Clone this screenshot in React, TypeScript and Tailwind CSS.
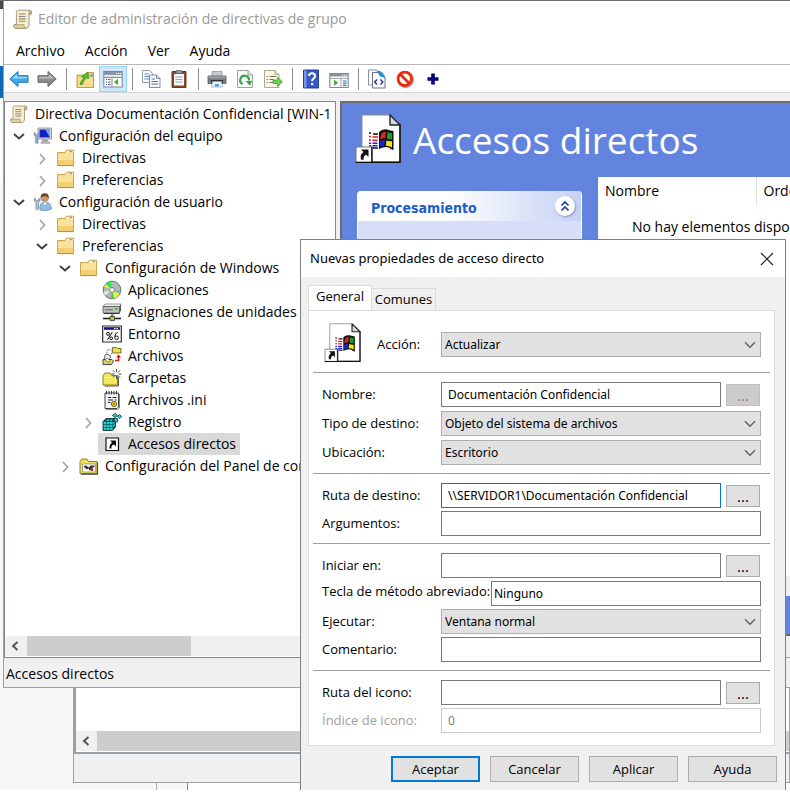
import React, { useId, useState } from "react";

type IconProps = { className?: string };

const UI = "font-['Open_Sans','Noto_Sans',sans-serif]";
const CAPTION = "font-['Noto_Sans','Open_Sans',sans-serif]";

/* ---------- icons ---------- */

function ScrollIcon({ className = "size-5" }: IconProps) {
  return (
    <svg viewBox="0 0 20 20" className={className} aria-hidden="true">
      <path d="M5 2 H16.5 Q18.5 2.5 17.5 5.5 H15.5 V16 Q15 18.5 12.5 18.5 H3 Q1 17.5 2 15 H4 V4 Q4 2.5 5 2Z" fill="#f7eecb" stroke="#a39a7c" strokeWidth="0.9" />
      <path d="M15.5 5.5 Q14.5 3 16.5 2.2 Q18.6 2.6 17.6 5.5Z" fill="#d6c890" stroke="#8f8768" strokeWidth="0.7" />
      <path d="M2 15.2 H11 Q10.6 18 12.5 18.5 H3 Q1 17.5 2 15.2Z" fill="#e2d39a" stroke="#9a9070" strokeWidth="0.7" />
      <path d="M6.3 5.5h6M6.3 7.7h6M6.3 9.9h6M6.3 12.1h6" stroke="#8d8a80" strokeWidth="1" />
    </svg>
  );
}

function FolderIcon({ className = "size-5" }: IconProps) {
  return (
    <svg viewBox="0 0 20 20" className={className} aria-hidden="true">
      <path d="M1.5 17.5 V4.5 H9 L10.5 2.2 H17.5 V17.5Z" fill="#f6d98a" stroke="#c79f45" strokeWidth="0.9" />
      <path d="M11 3h6v1.6h-7z" fill="#fff6d8" />
      <path d="M13.5 2.8h2.5v1.4h-2.5z" fill="#6fa6cf" />
      <path d="M2 6.3 H9.5 L11 5 H17 V17 H2Z" fill="#fbe29c" />
      <path d="M2 12h15v5H2z" fill="#f3cf74" />
      <path d="M1.5 17.6h16" stroke="#b98f36" />
    </svg>
  );
}

function ComputerIcon() {
  return (
    <svg viewBox="0 0 20 20" className="size-5" aria-hidden="true">
      <path d="M5 2h13.5v11H5z" fill="#d9dbe2" stroke="#85888f" strokeWidth="0.8" />
      <path d="M6.5 3.5h10.5v8H6.5z" fill="#0e22c8" />
      <path d="M12 3.5h5v8z" fill="#7ba2f5" />
      <path d="M9.5 13h5l1 3h-7z" fill="#a8abb2" />
      <path d="M8 16h9v1.5H8z" fill="#c9ccd2" stroke="#8c8f96" strokeWidth="0.5" />
      <path d="M1 6v3.200l1.600 1.400V17q1.200 1.500 2.400 0v-6.400L6.600 9.200V6L5 7.500v1.200H2.600V7.500z" fill="#8fb3d4" stroke="#5f7e9a" strokeWidth="0.600" />
    </svg>
  );
}

function UserIcon() {
  return (
    <svg viewBox="0 0 20 20" className="size-5" aria-hidden="true">
      <path d="M7 18 Q6 11.500 10 10.500 H14 Q18.500 11.500 18.500 17 Q14 19.500 7 18Z" fill="#8fbde6" stroke="#5688b5" strokeWidth="0.7" />
      <path d="M10.500 10.500 12 13.500l1.800-3z" fill="#fff" />
      <circle cx="11.800" cy="6" r="4" fill="#c9976c" />
      <path d="M7.500 6 Q7.300 1.300 11.500 1.300 Q16.200 1.400 15.800 6.500 Q14.500 3.800 11 4.300 Q9 4.500 7.500 6Z" fill="#6b4526" />
      <path d="M1.500 6v3l1.500 1.400V17q1.200 1.500 2.400 0v-6.600L7 9V6L5.400 7.400v1.300H3V7.400z" fill="#c3cfd9" stroke="#5c6f80" strokeWidth="0.7" />
    </svg>
  );
}

function DiscIcon() {
  return (
    <svg viewBox="0 0 20 20" className="size-5" aria-hidden="true">
      <circle cx="10" cy="10" r="8.800" fill="#b4b8b9" stroke="#5e6264" strokeWidth="0.9" />
      <path d="M10 10 3.500 4 Q6 1.500 9 1.300Z" fill="#35e05c" />
      <path d="M10 10 2 6.500 3.500 4Z" fill="#f4ef3c" />
      <path d="M10 10 17.800 13.500 Q16 17 12 18.500Z" fill="#f4ef3c" />
      <path d="M10 10 18.600 11 17.800 13.500Z" fill="#38c9e8" />
      <path d="M10 10 12 18.500 9 18.700Z" fill="#2ed653" />
      <path d="M10 10 1.300 12 3 15.500Z" fill="#e9ecec" />
      <circle cx="10" cy="10" r="2.600" fill="#e8e8e8" stroke="#777" strokeWidth="0.8" />
      <circle cx="10" cy="10" r="0.900" fill="#fff" />
    </svg>
  );
}

function DriveIcon() {
  return (
    <svg viewBox="0 0 20 20" className="size-5" aria-hidden="true">
      <path d="M1 4.500 3 2h16l-1 2.500z" fill="#efefef" stroke="#777" strokeWidth="0.7" />
      <path d="M1 4.500h16.500V11H1z" fill="#bdbdbd" stroke="#555" strokeWidth="0.8" />
      <path d="M17.500 4.500 19 2v6.500L17.500 11z" fill="#555" />
      <path d="M3 7.800h8" stroke="#666" strokeWidth="1" />
      <path d="M13 6h2.500v1.500H13z" fill="#18c22e" />
      <path d="M2 11.500h15.500" stroke="#333" strokeWidth="1" />
      <path d="M9 12h2.500v3H9z" fill="#888" />
      <path d="M1 16.500h18" stroke="#222" strokeWidth="1.600" />
      <path d="M8 14.500h4.500v4H8z" fill="#c8c02a" stroke="#333" strokeWidth="0.800" />
    </svg>
  );
}

function EnvIcon() {
  return (
    <svg viewBox="0 0 20 20" className="size-5" aria-hidden="true">
      <path d="M0.700 2h18.600v16H0.700z" fill="#fff" stroke="#333" strokeWidth="1.200" />
      <path d="M2 3.200h16v2.600H2z" fill="#12128c" />
      <path d="M12 4h1.500v1.200H12zM14.500 4H16v1.200h-1.500z" fill="#fff" />
      <g fill="none" stroke="#111" strokeWidth="1">
        <circle cx="6" cy="9.800" r="1.500" />
        <path d="M10.300 8 5.500 15.800" />
        <circle cx="9.200" cy="14.300" r="1.400" />
        <path d="M15.800 8.500q-3 .5-3 4.500" />
        <circle cx="14.600" cy="13.800" r="1.800" />
      </g>
    </svg>
  );
}

function FilesIcon() {
  return (
    <svg viewBox="0 0 20 20" className="size-5" aria-hidden="true">
      <path d="M10.500 1.500h4l1 1H19V7h-8.500z" fill="#e8e04a" stroke="#555513" strokeWidth="0.800" />
      <path d="M5.500 4 8.500 3l2 3-3.500 6-3-1.500z" fill="#fff" stroke="#555" strokeWidth="0.800" strokeDasharray="1.500 1" />
      <path d="M3 9 6 8l2.500 3L6 16l-4-1z" fill="#f4f4f4" stroke="#444" strokeWidth="0.800" />
      <path d="M1 13.500h9l1.500 1.500-2 3.500H1z" fill="#e5dc44" stroke="#333" strokeWidth="0.900" />
      <path d="M3 14l2-2 3 2.500-1 2z" fill="#fff" stroke="#333" strokeWidth="0.600" />
      <path d="M16.500 9.500V14.500H13" stroke="#e01a1a" strokeWidth="1.600" fill="none" />
      <path d="M14 11.500 16.500 8.500 19 11.500z" fill="#e01a1a" />
    </svg>
  );
}

function NewFolderIcon() {
  return (
    <svg viewBox="0 0 20 20" className="size-5" aria-hidden="true">
      <path d="M1 17V7.500L3 5h5l1.500 2.500H15.500V17z" fill="#f0e85c" stroke="#8a8320" strokeWidth="1" />
      <path d="M2 9.500h13" stroke="#fbf7a5" />
      <path d="M2.500 18h14V9" stroke="#333" fill="none" strokeWidth="0.800" />
      <path d="M14.500 1v3M14.500 8v3M9.500 6h3M16.500 6h3M11 2.500l2 2M18 2.500l-2 2M18 9.500l-2-2M11 9.500l2-2" stroke="#333" strokeWidth="0.900" />
      <circle cx="14.500" cy="6" r="1.300" fill="#fff" />
    </svg>
  );
}

function IniIcon() {
  return (
    <svg viewBox="0 0 20 20" className="size-5" aria-hidden="true">
      <path d="M3 3h13.500v14L15 18.500H3z" fill="#f6f6f6" stroke="#444" strokeWidth="1" />
      <path d="M17.500 4v14l-2 1.500H4" stroke="#888" fill="none" />
      <path d="M4.500 1v3.500M7 1v3.500M9.500 1v3.500M12 1v3.500M14.500 1v3.500" stroke="#444" strokeWidth="1" />
      <path d="M6 7.500h3M10.500 7.500h4M6 10h5M12.500 10h2M6 12.500h2.500" stroke="#222" strokeWidth="1.100" />
      <circle cx="12" cy="14" r="2.600" fill="#e6d92c" stroke="#4a4505" strokeWidth="0.800" />
      <circle cx="12" cy="14" r="0.800" fill="#4a4505" />
    </svg>
  );
}

function RegistryIcon() {
  return (
    <svg viewBox="0 0 20 20" className="size-5" aria-hidden="true">
      <path d="M1 9.500 4 6.500h9.500V15l-3 3.500H1z" fill="#0d4f55" stroke="#082a2e" strokeWidth="0.800" />
      <g fill="#22d3d6">
        <path d="M1.600 9.900h2.600v2.400H1.600zM4.800 9.900h2.600v2.400H4.800zM8 9.900h2.600v2.400H8zM1.600 12.900h2.600v2.400H1.600zM4.800 12.900h2.600v2.400H4.800zM8 12.900h2.600v2.400H8zM1.600 15.900h2.600v2.200H1.600zM4.800 15.900h2.600v2.200H4.800zM8 15.900h2.600v2.200H8z" />
        <path d="M11.200 10.500 13 8.500v2l-1.800 2zM11.200 13.500 13 11.500v2l-1.800 2z" />
        <path d="M4 9 5.500 7.300h2L6 9zM7.500 9 9 7.300h2L9.500 9z" />
        <path d="M10.500 3.500 13 1.500l2.500 2L13 5.500zM15.500 4.500l2-2 2 2-2 2z" stroke="#082a2e" strokeWidth="0.800" />
        <path d="M12 6.500h3.500V10h-3z" stroke="#082a2e" strokeWidth="0.800" />
      </g>
    </svg>
  );
}

function ShortcutIcon() {
  return (
    <svg viewBox="0 0 20 20" className="size-5" aria-hidden="true">
      <path d="M4 4h12.500v12.500H4z" fill="#fff" stroke="#111" strokeWidth="1.200" />
      <path d="M8 6.500h6v6l-2-2q-3 .5-2.500 4H7.500q-.5-4 2.500-6z" fill="#111" />
    </svg>
  );
}

function ControlPanelIcon() {
  return (
    <svg viewBox="0 0 20 20" className="size-5" aria-hidden="true">
      <path d="M1 17.500V5.500L3 3h5l1.500 2.500H18v12z" fill="#eee05a" stroke="#8b8020" strokeWidth="1" />
      <path d="M2 18.300h16.600V6.500" stroke="#333" fill="none" strokeWidth="0.900" />
      <path d="M3.500 8h13v8h-13z" fill="#fffef0" stroke="#777" strokeWidth="0.600" />
      <path d="M4.500 11q2-2.500 4-.5l1.500 1 1.500-2h4V11l-2 .5-1 3h-1.500l-1.500-2-2 1-1-1.500z" fill="#333" />
      <path d="M12 12h2v3h-2z" fill="#d5242a" />
    </svg>
  );
}

function ShortcutPage({ className }: IconProps) {
  return (
    <svg viewBox="0 0 46 49" className={className} aria-hidden="true">
      <path d="M7 1h28l10 10v37H7z" fill="#fff" stroke="#8a8a8a" strokeWidth="1" />
      <path d="M45 10.500V48.300H6" fill="none" stroke="#111" strokeWidth="1.600" />
      <path d="M35 1v10h10z" fill="#d9d9d9" stroke="#222" strokeWidth="1.400" strokeLinejoin="round" />
      <path d="M24 18q3.500-3.500 8-2.500 3.500 1 6.500 1.500V36q-2.500-.5-4.500-2.500-3.500-1.500-10 1.500z" fill="#111" />
      <path d="M26.500 19.500q2-2 4.500-1.800l-.8 6.500q-2.500-.2-5.200 1.300z" fill="#e32020" />
      <path d="M32.500 18q2 1 4.500 1v6.500q-3 0-5.200-1z" fill="#1d9a32" />
      <path d="M25 27.500q2.500-1.500 5-1.200l-.8 5.700q-2.200-.2-4.700 1z" fill="#1824d8" />
      <path d="M31.500 26.500q2.500 1 5.500.8V33.500q-3-2-6.300-1.800z" fill="#f5e51b" />
      <path d="M14 19h2M18 20h5M14 34h2M18 34h5" stroke="#111" strokeWidth="1.700" />
      <path d="M14 22.500h2M17.500 23h5.500M14 26h2M17.500 26.300h5" stroke="#e32020" strokeWidth="1.700" />
      <path d="M14 29.300h2M17.500 29.300h5M14 31.800h2M17.500 31.800h5" stroke="#1824d8" strokeWidth="1.500" />
      <path d="M1 33h15.500v15.300H1z" fill="#fff" stroke="#777" strokeWidth="1" />
      <path d="M17 32.500v16H.5" fill="none" stroke="#111" strokeWidth="1.400" />
      <path d="M6 35.500h7.500v7.500l-2.300-2.300q-3 1-2.700 5H6q-1.500-5 2.500-7.700z" fill="#111" />
    </svg>
  );
}

const toolIcons: Record<string, React.ReactNode> = {
  back: (
    <>
      <path d="M0.800 10 9 2.500v4.200h10v6.600H9v4.200z" fill="#3fa9ea" stroke="#1b73b8" strokeWidth="1" strokeLinejoin="round" />
      <path d="M3 9.500 8.200 5v2.700H18v1.800z" fill="#9bd8fb" />
    </>
  ),
  forward: (
    <>
      <path d="M19.200 10 11 2.500v4.200H1v6.600h10v4.200z" fill="#8c8c8c" stroke="#666" strokeWidth="1" strokeLinejoin="round" />
      <path d="M17 9.500 11.800 5v2.700H2v1.800z" fill="#b9b9b9" />
    </>
  ),
  up: (
    <>
      <path d="M2 18.500V6h8l2-2.500h6.500v15z" fill="#f5cf68" stroke="#c0943a" strokeWidth="0.900" />
      <path d="M3 9h15v9H3z" fill="#f9dd8a" />
      <path d="M15 5.500h3v2h-3z" fill="#6f9fc7" />
      <path d="M5 15.500q1-4.500 4-6.500L6.500 7.500 13 3l.5 6.500L11.500 9Q8 11.500 7.500 15.500z" fill="#53bf35" stroke="#2f8a1c" strokeWidth="0.700" />
    </>
  ),
  tree: (
    <>
      <path d="M0.800 2.500h18.400v15.500H0.800z" fill="#fff" stroke="#7d8794" strokeWidth="1.100" />
      <path d="M1 3h18v3H1z" fill="#8b96a5" />
      <path d="M13 4.500h1.200M15 4.500h1.200M17 4.500h1.200" stroke="#fff" strokeWidth="1.200" />
      <path d="M1.300 7.200h17.400" stroke="#c6ccd4" />
      <path d="M9 8v10M1 8.500h18" stroke="#7d8794" strokeWidth="0.900" />
      <path d="M3 10.500h1M3 13h1M3 15.500h1M5 10.500h2.500M5 13h2.500M5 15.500h2.500" stroke="#47688e" strokeWidth="1.200" />
      <path d="M15 9.800v6.400L11 13z" fill="#48ad35" />
    </>
  ),
  copy: (
    <>
      <path d="M1.500 1.500h7l3 3v9h-10z" fill="#fbfcfe" stroke="#8593a6" strokeWidth="0.900" />
      <path d="M3.500 5h4M3.500 7.500h5M3.500 10h5" stroke="#6288b8" />
      <path d="M8.500 6h7l3.500 3.500v9H8.500z" fill="#fbfcfe" stroke="#6f7f95" strokeWidth="0.900" />
      <path d="M15.500 6v3.500H19" fill="none" stroke="#6f7f95" strokeWidth="0.900" />
      <path d="M10.500 10h3.500M10.500 12.500h6.500M10.500 15h6.500" stroke="#3f73b8" strokeWidth="1.100" />
    </>
  ),
  paste: (
    <>
      <path d="M3 2.500h14v16H3z" fill="#8a4b26" stroke="#5c2e12" strokeWidth="0.900" />
      <path d="M5 5h10v11.500H5z" fill="#f7f8fa" />
      <path d="M7 1.500h6v3H7z" fill="#8b98a5" stroke="#55606b" strokeWidth="0.700" />
      <path d="M6.500 8h7M6.500 10.500h7M6.500 13h7" stroke="#9aa4b4" />
    </>
  ),
  print: (
    <>
      <path d="M5 2.500h10v5H5z" fill="#c6cacf" stroke="#8a8f96" strokeWidth="0.700" />
      <path d="M1 7h18v7.500H1z" fill="#7b8087" stroke="#54585e" strokeWidth="0.800" />
      <path d="M1.500 7.300h17v2h-17z" fill="#9ba1a8" />
      <path d="M4 11h12v3.500H4z" fill="#2f3338" />
      <path d="M5.500 12.500h9l1 5.500h-11z" fill="#e9f3fb" stroke="#94a8ba" strokeWidth="0.700" />
      <path d="M8 15h4v2.500H8z" fill="#4aa3dd" />
    </>
  ),
  refresh: (
    <>
      <path d="M2.500 1.500H13l4.500 4.500v12.500h-15z" fill="#f8faf8" stroke="#8f9a92" strokeWidth="0.900" />
      <path d="M13 1.500V6h4.500" fill="#dfe5e0" stroke="#8f9a92" strokeWidth="0.900" />
      <path d="M7.500 15A4.400 4.400 0 1 1 14 11.500" fill="none" stroke="#35a343" strokeWidth="2.200" />
      <path d="M10.500 12h6.500l-2 4.800z" fill="#35a343" />
    </>
  ),
  exportList: (
    <>
      <path d="M1.500 1.500H12l4 4v13H1.500z" fill="#fbf8e6" stroke="#a39f85" strokeWidth="0.900" />
      <path d="M12 1.500v4h4" fill="#e5e0c4" stroke="#a39f85" strokeWidth="0.900" />
      <path d="M3.500 7.500h1.300M3.500 10.500h1.300M3.500 13.500h1.300M6.500 7.500h7M6.500 10.500h4M6.500 13.500h4" stroke="#777464" strokeWidth="1.100" />
      <path d="M10 11h4.500V8l5 4.800-5 4.700v-3H10z" fill="#6cd04f" stroke="#3d9a27" strokeWidth="0.700" />
    </>
  ),
  help: (
    <>
      <path d="M2.500 1h15v18h-15z" fill="#3558c4" stroke="#1d3488" strokeWidth="0.900" />
      <path d="M3 1.500h2.500v17H3z" fill="#7d97e4" />
      <path d="M8 7q0-2.700 3-2.700T14 7q0 1.600-1.500 2.600T11 12.300" fill="none" stroke="#fff" strokeWidth="2" />
      <path d="M10 14h2.200v2.200H10z" fill="#fff" />
    </>
  ),
  actions: (
    <>
      <path d="M0.800 4.500h18.400v14H0.800z" fill="#fbfbfb" stroke="#85898f" strokeWidth="1.100" />
      <path d="M1 5h18v2.500H1z" fill="#8b949e" />
      <path d="M13 6.300h1.200M15 6.300h1.200M17 6.300h1.200" stroke="#fff" />
      <path d="M1 9.500h18M12 9.500v9" stroke="#9aa0a7" strokeWidth="0.900" />
      <path d="M5 10.800v6l4.200-3z" fill="#48ad35" />
      <path d="M14 12h3.500M14 14.200h3.500M14 16.400h3.500" stroke="#3f73b8" strokeWidth="1.200" />
    </>
  ),
  xml: (
    <>
      <path d="M1.500 1h8l2 2v13h-10z" fill="#fbfcfe" stroke="#7b8694" strokeWidth="0.900" />
      <path d="M5.500 3.500H13l5 5v10.500H5.500z" fill="#fbfcfe" stroke="#5a6672" strokeWidth="0.900" />
      <path d="M9.500 1.500q7 0 8.800 7.500L13 7.500z" fill="#2f8fd0" />
      <path d="m10 10.500-2.300 2.500 2.300 2.500M13.500 10.500l2.300 2.500-2.300 2.500" fill="none" stroke="#3532a0" strokeWidth="1.500" />
    </>
  ),
  ban: (
    <>
      <circle cx="10.600" cy="10.700" r="7.500" fill="none" stroke="#55555588" strokeWidth="2" />
      <circle cx="9.800" cy="9.800" r="6.700" fill="#fff" stroke="#ee2b0c" strokeWidth="2.800" />
      <path d="m5.200 5.200 9.200 9.200" stroke="#ee2b0c" strokeWidth="2.800" />
    </>
  ),
  plus: <path d="M8.200 4.500h3.600v3.700h3.700v3.600h-3.700v3.700H8.200v-3.700H4.500V8.200h3.700z" fill="#00007c" />,
};

function Chevron({ open }: { open: boolean }) {
  return (
    <svg viewBox="0 0 20 20" className="size-5" aria-hidden="true">
      {open ? (
        <path d="m5 8 5 4.500L15 8" fill="none" stroke="#404040" strokeWidth="1.900" />
      ) : (
        <path d="m8 6 4.500 5L8 16" fill="none" stroke="#a3a3a3" strokeWidth="1.700" />
      )}
    </svg>
  );
}

function ScrollLeft() {
  return (
    <button type="button" aria-label="Desplazar a la izquierda" className="flex w-5 shrink-0 items-center justify-center">
      <svg viewBox="0 0 10 10" className="size-[10px]" aria-hidden="true">
        <path d="M7.500 1 3 5l4.500 4" fill="none" stroke="#555" strokeWidth="2" />
      </svg>
    </button>
  );
}

/* ---------- tool bar ---------- */

const toolGroups: [string, string][][] = [
  [["back", "Atrás"], ["forward", "Adelante"]],
  [["up", "Subir un nivel"], ["tree", "Mostrar árbol de consola"]],
  [["copy", "Copiar"], ["paste", "Pegar"]],
  [["print", "Imprimir"], ["refresh", "Actualizar"], ["exportList", "Exportar lista"]],
  [["help", "Ayuda"], ["actions", "Panel de acciones"]],
  [["xml", "Ver XML"], ["ban", "Detener"], ["plus", "Agregar"]],
];

function Toolbar() {
  return (
    <div className="flex h-7 items-center border-b border-[#d5d5d5] pt-px pl-px">
      {toolGroups.map((group, g) => (
        <React.Fragment key={g}>
          {g > 0 && (
            <span className="flex w-[10px] justify-center">
              <span className="h-[22px] w-px bg-[#8c8c8c]" />
            </span>
          )}
          {group.map(([id, label]) => (
            <button
              key={id}
              type="button"
              aria-label={label}
              className={
                id === "tree"
                  ? "flex h-[26px] w-7 items-center justify-center border border-[#99d1ff] bg-[#cce8ff]"
                  : "flex h-[26px] w-7 items-center justify-center"
              }
            >
              <svg viewBox="0 0 20 20" className="size-5" aria-hidden="true">{toolIcons[id]}</svg>
            </button>
          ))}
        </React.Fragment>
      ))}
    </div>
  );
}

/* ---------- tree ---------- */

const indents = ["pl-1", "pl-1", "pl-[27px]", "pl-[50px]", "pl-[73px]"];

type Node = { label: string; depth: number; icon: React.ReactNode; state?: "open" | "closed"; selected?: boolean };

const nodes: Node[] = [
  { label: "Directiva Documentación Confidencial [WIN-1", depth: 0, icon: <ScrollIcon /> },
  { label: "Configuración del equipo", depth: 1, icon: <ComputerIcon />, state: "open" },
  { label: "Directivas", depth: 2, icon: <FolderIcon />, state: "closed" },
  { label: "Preferencias", depth: 2, icon: <FolderIcon />, state: "closed" },
  { label: "Configuración de usuario", depth: 1, icon: <UserIcon />, state: "open" },
  { label: "Directivas", depth: 2, icon: <FolderIcon />, state: "closed" },
  { label: "Preferencias", depth: 2, icon: <FolderIcon />, state: "open" },
  { label: "Configuración de Windows", depth: 3, icon: <FolderIcon />, state: "open" },
  { label: "Aplicaciones", depth: 4, icon: <DiscIcon /> },
  { label: "Asignaciones de unidades", depth: 4, icon: <DriveIcon /> },
  { label: "Entorno", depth: 4, icon: <EnvIcon /> },
  { label: "Archivos", depth: 4, icon: <FilesIcon /> },
  { label: "Carpetas", depth: 4, icon: <NewFolderIcon /> },
  { label: "Archivos .ini", depth: 4, icon: <IniIcon /> },
  { label: "Registro", depth: 4, icon: <RegistryIcon />, state: "closed" },
  { label: "Accesos directos", depth: 4, icon: <ShortcutIcon />, selected: true },
  { label: "Configuración del Panel de control", depth: 3, icon: <ControlPanelIcon />, state: "closed" },
];

function Tree() {
  return (
    <ul className="flex-1 overflow-hidden pt-px">
      {nodes.map((n, i) => (
        <li key={i} className={`flex h-[22px] whitespace-nowrap ${indents[n.depth]}`}>
          {n.depth > 0 && <span className="flex w-5 shrink-0 items-center">{n.state && <Chevron open={n.state === "open"} />}</span>}
          <button
            type="button"
            className={`flex items-center gap-[6px] pr-1 ${n.depth > 0 ? "pl-1" : ""} ${n.selected ? "bg-[#d9d9d9]" : ""}`}
          >
            {n.icon}
            <span>{n.label}</span>
          </button>
        </li>
      ))}
    </ul>
  );
}

/* ---------- editor window ---------- */

function EditorWindow() {
  return (
    <section className={`absolute top-0 right-0 left-[3px] flex h-[687px] flex-col border-b border-l border-[#a0a0a0] bg-[#f0f0f0] text-[14px] leading-5 text-black ${UI}`}>
      <header className="flex h-9 items-center gap-1 bg-white pl-2 text-[#999]">
        <ScrollIcon className="size-[22px]" />
        <h1>Editor de administración de directivas de grupo</h1>
      </header>
      <nav className="flex h-7 items-center gap-5 border-b border-[#b8b8b8] bg-white px-3">
        {["Archivo", "Acción", "Ver", "Ayuda"].map((m) => (
          <button key={m} type="button">{m}</button>
        ))}
      </nav>
      <div className="bg-white">
        <Toolbar />
      </div>
      <div className="flex min-h-0 flex-1 gap-1 pt-2">
        <div className="flex w-[332px] shrink-0 flex-col border border-[#828790] bg-white">
          <Tree />
          <div className="flex h-5 bg-[#f0f0f0]">
            <ScrollLeft />
            <span className="ml-[2px] w-[164px] bg-[#cdcdcd]" />
          </div>
          <span className="h-px" />
        </div>
        <div className="flex min-w-0 flex-1 flex-col">
          <div className="flex min-h-0 flex-1 flex-col border-2 border-r-0 border-[#6b6d72] bg-[#6284de]">
            <div className="flex h-[74px] items-center gap-3 pb-1 pl-[13px]">
              <ShortcutPage className="h-[49px] w-[46px] shrink-0" />
              <h2 className="pt-1 text-[37px] leading-[50px] whitespace-nowrap text-white">Accesos directos</h2>
            </div>
            <div className="flex min-h-0 flex-1 gap-4 pl-[15px]">
              <aside className="mt-[14px] w-[225px] shrink-0 overflow-hidden rounded-t-[4px] border-x border-white bg-[#d6dff7]">
                <div className="flex h-[30px] items-center justify-between bg-linear-to-r from-white from-40% to-[#c5d1f4] pr-[6px] pl-[13px]">
                  <h3 className="pt-1 font-['DejaVu_Sans_Condensed','DejaVu_Sans',sans-serif] text-[14px] font-bold text-[#215dc6]">Procesamiento</h3>
                  <button type="button" aria-label="Contraer" className="flex size-5 items-center justify-center rounded-full bg-white shadow-[1px_1px_2px_#8794bd]">
                    <svg viewBox="0 0 12 12" className="size-3" aria-hidden="true">
                      <path d="m2.500 5.500 3.500-3.500 3.500 3.500M2.500 10.500 6 7l3.500 3.500" fill="none" stroke="#1c3fa0" strokeWidth="1.700" />
                    </svg>
                  </button>
                </div>
              </aside>
              <div className="mb-[38px] flex min-w-0 flex-1 flex-col overflow-hidden bg-white whitespace-nowrap">
                <table className="w-full table-fixed">
                  <thead>
                    <tr className="h-7 text-left">
                      <th className="w-[158px] border-r border-[#e0e0e0] pl-[7px] font-normal">Nombre</th>
                      <th className="pl-[7px] font-normal">Orden</th>
                    </tr>
                  </thead>
                  <tbody>
                    <tr className="h-11">
                      <td colSpan={2} className="pl-[34px]">No hay elementos disponibles</td>
                    </tr>
                  </tbody>
                </table>
                <div className="flex-1" />
                <div className="h-5 bg-[#f0f0f0]" />
              </div>
            </div>
          </div>
          <div className="h-[22px] border-b border-[#a0a0a0] bg-[#f0f0f0]" />
        </div>
      </div>
      <footer className="flex h-[29px] items-center pt-[2px] pl-[2px]">Accesos directos</footer>
    </section>
  );
}

/* ---------- window behind the editor ---------- */

function BackgroundWindow() {
  return (
    <section aria-hidden="true" className="absolute top-[600px] right-0 left-[73px] flex h-[182px] flex-col border border-[#a0a0a0] bg-[#f0f0f0]">
      <div className="flex flex-1 flex-col justify-end border-b-2 border-l-2 border-[#9a9fa9] bg-white pb-px">
        <div className="flex h-5 bg-[#f0f0f0]">
          <ScrollLeft />
          <span className="ml-px flex-1 bg-[#cdcdcd]" />
        </div>
      </div>
      <div className="h-7" />
    </section>
  );
}

/* ---------- dialog ---------- */

const fieldText = `text-[12px] leading-[17px] ${CAPTION}`;

function Select({ id, value, options }: { id: string; value: string; options: string[] }) {
  const [v, setV] = useState(value);
  return (
    <span className="relative flex h-[25px] flex-1">
      <select
        id={id}
        value={v}
        onChange={(e) => setV(e.target.value)}
        className={`w-full appearance-none border border-[#adadad] bg-[#e1e1e1] px-[3px] ${fieldText}`}
      >
        {options.map((o) => (
          <option key={o}>{o}</option>
        ))}
      </select>
      <svg viewBox="0 0 12 8" className="pointer-events-none absolute top-[9px] right-[5px] h-2 w-3" aria-hidden="true">
        <path d="m1 1.200 5 5 5-5" fill="none" stroke="#606060" strokeWidth="1.400" />
      </svg>
    </span>
  );
}

function Browse({ disabled = false, label }: { disabled?: boolean; label: string }) {
  return (
    <button
      type="button"
      disabled={disabled}
      aria-label={label}
      className={`flex h-[22px] w-[34px] shrink-0 items-center justify-center border text-[15px] leading-4 ${
        disabled ? "border-[#bfbfbf] bg-[#cccccc] text-[#838383]" : "border-[#adadad] bg-[#e1e1e1] text-black"
      }`}
    >
      ...
    </button>
  );
}

type FieldProps = {
  label: string;
  value?: string;
  browse?: "on" | "off";
  focused?: boolean;
  disabled?: boolean;
  wideLabel?: boolean;
  options?: string[];
};

function Field({ label, value = "", browse, focused, disabled, wideLabel, options }: FieldProps) {
  const id = useId();
  const [v, setV] = useState(value);
  const tone = focused
    ? "border-[#0078d7] text-black"
    : disabled
      ? "border-[#cccccc] text-[#7d7d7d]"
      : "border-[#7a7a7a] text-black";
  return (
    <div className="flex items-center">
      <label
        htmlFor={id}
        className={`shrink-0 whitespace-nowrap ${wideLabel ? "w-[169px] pb-1" : "w-[119px]"} ${disabled ? "text-[#a0a0a0]" : ""}`}
      >
        {label}
      </label>
      {options ? (
        <Select id={id} value={value} options={options} />
      ) : (
        <input
          id={id}
          type="text"
          value={v}
          disabled={disabled}
          onChange={(e) => setV(e.target.value)}
          className={`h-[25px] min-w-0 flex-1 border bg-white ${wideLabel ? "px-[2px]" : "px-[6px]"} ${tone} ${fieldText}`}
        />
      )}
      {browse && (
        <span className="flex pr-px pl-[5px]">
          <Browse disabled={browse === "off"} label={`Examinar ${label}`} />
        </span>
      )}
    </div>
  );
}

function Section({ children, spacing }: { children: React.ReactNode; spacing: string }) {
  return <div className={`mx-1 flex flex-col px-[9px] pt-[9px] ${spacing}`}>{children}</div>;
}

function PropertiesDialog() {
  const actionId = useId();
  return (
    <section
      role="dialog"
      aria-label="Nuevas propiedades de acceso directo"
      className={`absolute top-[238px] bottom-[-6px] left-[300px] flex w-[486px] flex-col border border-[#7f7f7f] bg-[#f0f0f0] text-[13px] leading-[17px] text-black ${UI}`}
    >
      <header className="flex h-[37px] shrink-0 items-center justify-between bg-white pr-[11px] pl-[9px]">
        <h2 className={CAPTION}>Nuevas propiedades de acceso directo</h2>
        <button type="button" aria-label="Cerrar">
          <svg viewBox="0 0 14 14" className="size-[14px]" aria-hidden="true">
            <path d="m1 1 12 12M13 1 1 13" stroke="#222" strokeWidth="1.200" />
          </svg>
        </button>
      </header>
      <div className="flex flex-col pt-2 pr-[10px] pl-[7px]">
        <div role="tablist" className="flex items-end">
          <button role="tab" aria-selected="true" type="button" className="-mb-px h-[26px] w-[64px] border border-b-0 border-[#dcdcdc] bg-white pb-1">
            General
          </button>
          <button role="tab" aria-selected="false" type="button" className="h-[22px] w-16 border border-b-0 border-l-0 border-[#dcdcdc] bg-[#f0f0f0]">
            Comunes
          </button>
        </div>
        <div role="tabpanel" className="border border-[#dcdcdc] bg-white pb-1">
          <div className="mx-1 flex h-[62px] items-center border-b border-[#a0a0a0] pt-[6px] pr-[9px] pl-[11px]">
            <ShortcutPage className="mb-1 h-[39px] w-[37px] shrink-0" />
            <label htmlFor={actionId} className="w-[80px] pl-4">Acción:</label>
            <Select id={actionId} value="Actualizar" options={["Crear", "Reemplazar", "Actualizar", "Eliminar"]} />
          </div>
          <Section spacing="gap-1 pb-2 border-b border-[#a0a0a0]">
            <Field label="Nombre:" value="Documentación Confidencial" browse="off" />
            <Field label="Tipo de destino:" value="Objeto del sistema de archivos" options={["Objeto del sistema de archivos", "Dirección URL", "Objeto shell"]} />
            <Field label="Ubicación:" value="Escritorio" options={["Escritorio", "Inicio"]} />
          </Section>
          <Section spacing="gap-[3px] pb-[7px] border-b border-[#a0a0a0]">
            <Field label="Ruta de destino:" value="\\SERVIDOR1\Documentación Confidencial" browse="on" focused />
            <Field label="Argumentos:" />
          </Section>
          <Section spacing="gap-[3px] pb-2 border-b border-[#a0a0a0]">
            <Field label="Iniciar en:" browse="on" />
            <Field label="Tecla de método abreviado:" value="Ninguno" wideLabel />
            <Field label="Ejecutar:" value="Ventana normal" options={["Ventana normal", "Minimizada", "Maximizada"]} />
            <Field label="Comentario:" />
          </Section>
          <Section spacing="gap-[3px] pb-2">
            <Field label="Ruta del icono:" browse="on" />
            <Field label="Índice de icono:" value="0" disabled />
          </Section>
        </div>
      </div>
      <div className="flex justify-end gap-[10px] pt-[10px] pr-2">
        {["Aceptar", "Cancelar", "Aplicar", "Ayuda"].map((b, i) => (
          <button
            key={b}
            type="button"
            className={i === 0 ? "h-[26px] w-[89px] border-2 border-[#0078d7] bg-[#e1e1e1]" : "h-[26px] w-[89px] border border-[#adadad] bg-[#e1e1e1]"}
          >
            {b}
          </button>
        ))}
      </div>
    </section>
  );
}

export default function App() {
  return (
    <div className="h-screen bg-white pb-[3px]">
      <main className="relative h-full overflow-hidden border-t border-[#6b6b6b] bg-[#f7f7f7]">
        <div aria-hidden="true" className="absolute top-0 left-0 w-[3px] bg-white">
          <div className="h-2 bg-[#484848]" />
          <div className="h-[57px]" />
          <div className="h-8 bg-[#0b69b7]" />
          <div className="h-[84px]" />
        </div>
        <div aria-hidden="true" className="absolute right-0 bottom-0 left-[156px] flex h-5 border-l border-[#a9a9a9]">
          <span className="w-[30px]" />
          <span className="flex-1 border-l border-[#8a8a8a] bg-white" />
        </div>
        <BackgroundWindow />
        <EditorWindow />
        <PropertiesDialog />
      </main>
    </div>
  );
}
